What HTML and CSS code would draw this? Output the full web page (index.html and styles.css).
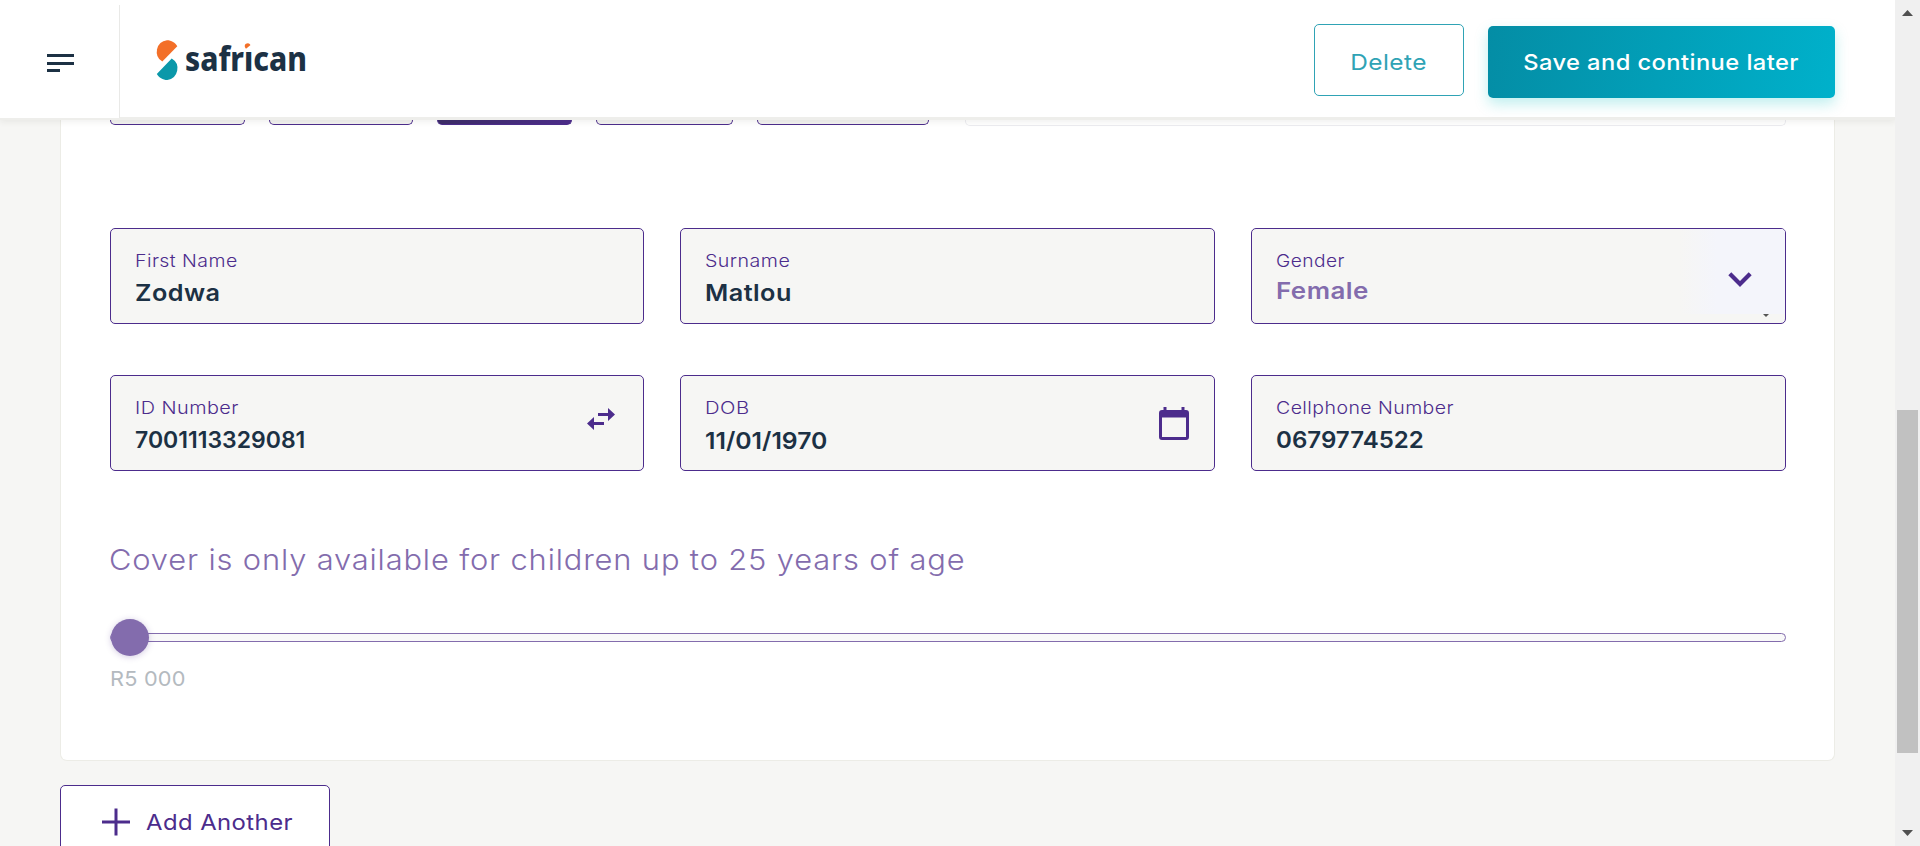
FILE: index.html
```
<!DOCTYPE html>
<html lang="en">
<head>
<meta charset="utf-8">
<title>Safrican</title>
<link rel="stylesheet" href="styles.css">
</head>
<body>
<div class="app">
  <header class="header">
    <button class="menu" aria-label="Menu">
      <svg width="27" height="18" viewBox="0 0 27 18"><path d="M0 0h27v3H0zM0 8h27v3H0zM0 15h13v3H0z" fill="#1c3144"/></svg>
    </button>
    <svg class="logo" width="152" height="42" viewBox="0 0 152 42">
      <path d="M6.300 21.600A11.600 11.600 0 0 1 11 .2C15.500 .2 19.200 2.600 21.300 6.300Z" fill="#f36f28"/>
      <path d="M15.700 18.500A11.600 11.600 0 0 1 11.300 40C6.800 40 3 37.500 .8 34Z" fill="#0b98a9"/>
      <text class="logo-text" x="29" y="31" textLength="122" lengthAdjust="spacingAndGlyphs">safrıcan</text>
      <path d="M90 8.700C87.500 6 89 3.200 91.800 3.200C93.500 3.200 94.200 4.200 94.300 5.200Z" fill="#f36f28"/>
    </svg>
    <div class="actions">
      <button class="btn btn-outline"><span class="wide t-delete">Delete</span></button>
      <button class="btn btn-primary"><span class="wide t-save">Save and continue later</span></button>
    </div>
  </header>

  <main class="page">
    <section class="card">
      <div class="tabs">
        <div class="tab tab-a"></div>
        <div class="tab tab-b"></div>
        <div class="tab tab-a tab-active"></div>
        <div class="tab tab-c"></div>
        <div class="tab tab-d"></div>
        <div class="tab-panel"></div>
      </div>

      <div class="fields">
        <div class="field"><div class="label t-first">First Name</div><div class="value t-zodwa">Zodwa</div></div>
        <div class="field"><div class="label t-surname">Surname</div><div class="value t-matlou">Matlou</div></div>
        <div class="field field-select">
          <div class="label t-gender">Gender</div><div class="value t-female">Female</div>
          <div class="select-side">
            <svg width="24" height="15" viewBox="0 0 24 15"><path d="M1.800 1.800L12 12L22.200 1.800" fill="none" stroke="#4c2c8c" stroke-width="4.200"/></svg>
          </div>
          <svg class="native-arrow" width="6" height="3" viewBox="0 0 6 3"><path d="M0 0h6L3 3z" fill="#555"/></svg>
        </div>
        <div class="field">
          <div class="label t-id">ID Number</div><div class="value t-idnum">7001113329081</div>
          <svg class="icon-swap" width="28" height="22" viewBox="0 0 28 22"><path d="M21 0L28 6.500L21 13V8H11V5H21ZM7 9L0 15.500L7 22V17H17V14H7Z" fill="#4c2c8c"/></svg>
        </div>
        <div class="field">
          <div class="label t-dob">DOB</div><div class="value t-date">11/01/1970</div>
          <svg class="icon-cal" width="30" height="33" viewBox="0 0 30 33"><path d="M4.500 0h3v3h15V0h3v3H27a3 3 0 0 1 3 3v24a3 3 0 0 1-3 3H3a3 3 0 0 1-3-3V6a3 3 0 0 1 3-3h1.500ZM3 10.500V30H27V10.500Z" fill="#4c2c8c" fill-rule="evenodd"/></svg>
        </div>
        <div class="field"><div class="label t-cell">Cellphone Number</div><div class="value t-cellnum">0679774522</div></div>
      </div>

      <h2 class="notice">Cover is only available for children up to 25 years of age</h2>
      <div class="slider"><div class="track"></div><div class="thumb"></div></div>
      <div class="amount">R5 000</div>
    </section>

    <button class="add">
      <svg width="28" height="28" viewBox="0 0 28 28"><path d="M14 0.500V27.500M0 14H28" stroke="#4c2c8c" stroke-width="3"/></svg>
      <span class="add-text">Add Another</span>
    </button>
  </main>
</div>

<div class="scrollbar">
  <svg width="11" height="6" viewBox="0 0 11 6"><path d="M0 6L5.500 0L11 6z" fill="#505050"/></svg>
  <div class="scroll-thumb"></div>
  <svg class="scroll-down" width="11" height="6" viewBox="0 0 11 6"><path d="M0 0h11L5.500 6z" fill="#505050"/></svg>
</div>
</body>
</html>
```
FILE: styles.css
```
* { box-sizing: border-box; }

body {
  margin: 0;
  height: 846px;
  display: flex;
  overflow: hidden;
  background: #f6f6f4;
  font-family: "Inter", sans-serif;
  color: #1c3144;
}

button { font: inherit; margin: 0; cursor: pointer; }
svg { display: block; flex: none; }

.app {
  flex: 1;
  height: 846px;
  overflow: hidden;
  display: flex;
  flex-direction: column;
}

/* Header */
.header {
  position: relative;
  z-index: 1;
  flex: none;
  height: 120px;
  display: flex;
  align-items: flex-start;
  background: #fff;
  border-bottom: 3px solid #eeeeeb;
  box-shadow: 0 2px 6px rgba(60, 60, 50, .08);
}

.menu {
  width: 120px;
  height: 113px;
  margin-top: 5px;
  padding: 49px 0 0 47px;
  display: flex;
  align-items: flex-start;
  background: #fff;
  border: 0;
  border-right: 1px solid #e9e9e7;
}

.logo { margin: 40px 0 0 36px; overflow: visible; }

.logo-text {
  font: 800 34px "Noto Sans", "Open Sans", sans-serif;
  fill: #1c3144;
}

.actions {
  margin-left: auto;
  padding: 24px 60px 0 0;
  display: flex;
  gap: 24px;
}

.btn {
  height: 72px;
  border-radius: 5px;
  font-size: 22px;
  padding: 3px 0 0;
  text-align: center;
  white-space: nowrap;
}

.btn-outline {
  width: 150px;
  color: #2fa3b5;
  background: #fff;
  border: 1px solid #2fa3b5;
}

.btn-primary {
  width: 347px;
  margin-top: 2px;
  padding-top: 0;
  color: #fff;
  background: linear-gradient(100deg, #048da5, #00b1cb);
  border: 0;
  box-shadow: 0 6px 14px rgba(0, 190, 190, .25);
}

/* Wide letterforms: stretched glyphs with light tracking */
.wide { display: inline-block; letter-spacing: .4px; }
.t-delete { font-weight: 400; transform: scaleX(1.11); }
.t-save { font-weight: 500; transform: scaleX(1.077); }

/* Form card */
.page { padding: 0 60px; }

.card {
  height: 641px;
  padding: 0 48px 0 49px;
  background: #fff;
  border: 1px solid #ecece6;
  border-top: 0;
  border-radius: 0 0 7px 7px;
}

.tabs { display: flex; height: 6px; }

.tab {
  height: 5px;
  margin-right: 24px;
  background: #f2f2f0;
  border: 1px solid #4c2c8c;
  border-top: 0;
  border-radius: 0 0 6px 6px;
}

.tab-a { width: 135px; }
.tab-b { width: 144px; }
.tab-c { width: 137px; }
.tab-d { width: 172px; margin-right: 36px; }
.tab-active { background: linear-gradient(90deg, #3c2c68, #4c2c8c); }

.tab-panel {
  flex: 1;
  height: 6px;
  border: 1px solid #ececf0;
  border-top: 0;
  border-radius: 0 0 5px 5px;
}

.fields {
  margin-top: 102px;
  display: grid;
  grid-template-columns: 534px 535px 535px;
  gap: 51px 36px;
}

.field {
  position: relative;
  height: 96px;
  padding: 21px 24px 0;
  background: #f6f6f4;
  border: 1px solid #4c2c8c;
  border-radius: 5px;
}

.label,
.value,
.notice,
.amount,
.add-text {
  letter-spacing: .4px;
  transform-origin: left center;
  white-space: nowrap;
}

.label {
  width: max-content;
  font-size: 17.5px;
  font-weight: 300;
  line-height: 22px;
  color: #4c2c8c;
}

.value {
  width: max-content;
  margin-top: 7px;
  font-size: 23px;
  font-weight: 600;
  line-height: 28px;
}

.t-first { transform: scaleX(1.114); }
.t-surname { transform: scaleX(1.122); }
.t-gender { transform: scaleX(1.096); }
.t-id { transform: scaleX(1.135); }
.t-dob { transform: scaleX(1.158); }
.t-cell { transform: scaleX(1.113); }
.t-zodwa { transform: scaleX(1.097); }
.t-matlou { transform: scaleX(1.097); }
.t-female { margin-top: 5px; color: #836cad; transform: scaleX(1.127); }
.t-idnum { letter-spacing: 0; }
.t-cellnum { letter-spacing: 0; transform: scaleX(1.047); }
.t-date { letter-spacing: 0; margin-top: 8px; transform: scaleX(1.075); }

.select-side {
  position: absolute;
  top: 0;
  right: 0;
  width: 106px;
  height: 85px;
  padding: 43px 0 0 49px;
  border-radius: 0 4px 0 0;
  background: linear-gradient(90deg, rgba(244, 245, 251, 0), #f4f5fb 35%);
}

.native-arrow { position: absolute; right: 16px; bottom: 6px; }
.icon-swap { position: absolute; right: 28px; top: 32px; }
.icon-cal { position: absolute; right: 25px; top: 31px; }

.notice {
  width: max-content;
  margin: 69px 0 0 -1px;
  font-size: 29px;
  font-weight: 300;
  line-height: 40px;
  letter-spacing: .8px;
  color: #836cad;
  transform: scaleX(1.064);
}

/* Cover amount slider */
.slider {
  position: relative;
  height: 37px;
  margin-top: 39px;
  display: flex;
  align-items: center;
}

.track {
  flex: 1;
  height: 9px;
  background: #f9f9f9;
  border: 1px solid #836cad;
  border-radius: 5px;
}

.thumb {
  position: absolute;
  left: 1px;
  top: 0;
  width: 38px;
  height: 37px;
  border-radius: 50%;
  background: #836cad;
  box-shadow: 0 1px 6px rgba(76, 44, 140, .25);
}

.amount {
  width: max-content;
  margin-top: 10px;
  font-size: 20.5px;
  line-height: 26px;
  letter-spacing: .2px;
  color: #b4babf;
  transform: scaleX(1.06);
}

.add {
  width: 270px;
  height: 72px;
  margin-top: 24px;
  padding: 2px 0 0 41px;
  display: flex;
  align-items: center;
  gap: 16px;
  background: #fff;
  border: 1px solid #4c2c8c;
  border-radius: 5px;
  color: #4c2c8c;
  font-size: 22px;
}

.add-text { font-weight: 400; transform: scaleX(1.085); }

/* Scrollbar */
.scrollbar {
  width: 25px;
  height: 846px;
  padding: 10px 0 10px 2px;
  background: #f0f0f0;
  display: flex;
  flex-direction: column;
}

.scrollbar svg { margin-left: 5px; }
.scroll-thumb { width: 21px; height: 343px; margin-top: 394px; background: #c1c1c1; }
.scrollbar .scroll-down { margin-top: auto; }
```
